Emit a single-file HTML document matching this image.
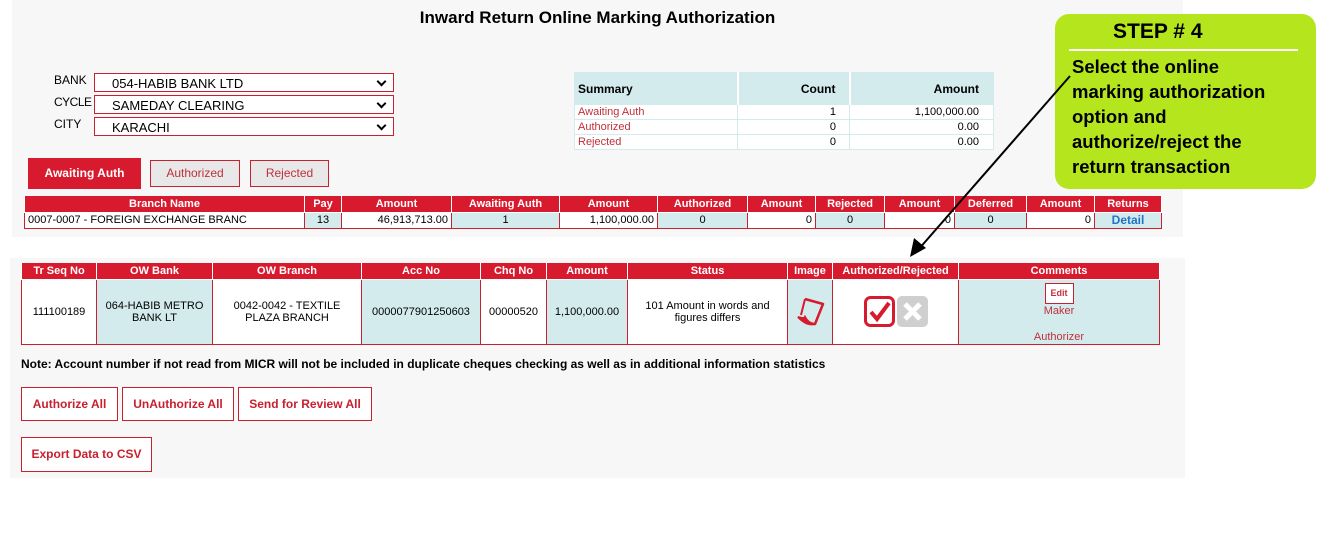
<!DOCTYPE html>
<html><head><meta charset="utf-8"><style>
*{box-sizing:border-box;margin:0;padding:0}
body{width:1319px;height:556px;background:#fff;font-family:"Liberation Sans",sans-serif;position:relative;overflow:hidden;font-size:11px;color:#000}
.a{position:absolute}
.panel{background:#f7f7f7}
table{border-collapse:collapse;position:absolute;table-layout:fixed}
th{background:#d71a2e;color:#fff;font-weight:bold;font-size:11px;border:1px solid #fff;border-top:0;padding:0;height:16px}
td{border:1px solid #c9202f;font-size:11px;padding:0 3px}
.c{background:#d4ebee}
.sel{position:absolute;left:94px;width:300px;height:19px;border:1px solid #c8202f;background:#fff;font-size:13px;padding-left:17px;line-height:19px}
.sel:after{content:"";position:absolute;right:8px;top:4px;width:5px;height:5px;border-right:2px solid #000;border-bottom:2px solid #000;transform:rotate(45deg)}
.lbl{position:absolute;left:54px;font-size:12px}
.btn{position:absolute;border:1px solid #c8202f;background:#fff;color:#c8202f;font-size:12px;font-weight:bold;text-align:center}
.st td{border:1px solid #d4ebee;color:#c0303b;height:15px;font-size:11px}
</style></head><body>
<div class="a panel" style="left:12px;top:0;width:1171px;height:237px"></div>
<div class="a panel" style="left:10px;top:258px;width:1175px;height:220px"></div>
<div class="a" style="left:0;width:1195px;top:8px;text-align:center;font-size:17px;font-weight:bold">Inward Return Online Marking Authorization</div>

<div class="lbl" style="top:73px">BANK</div><div class="sel" style="top:73px">054-HABIB BANK LTD</div>
<div class="lbl" style="top:95px;letter-spacing:-0.5px">CYCLE</div><div class="sel" style="top:95px">SAMEDAY CLEARING</div>
<div class="lbl" style="top:117px">CITY</div><div class="sel" style="top:117px">KARACHI</div>

<table class="st" style="left:574px;top:72px;width:419px">
<colgroup><col style="width:163px"><col style="width:112px"><col style="width:144px"></colgroup>
<tr style="height:32px;background:#d4ebee;font-weight:bold;font-size:12px"><td style="color:#000;font-size:12px;border-right:2px solid #fff">Summary</td><td style="color:#000;text-align:right;padding-right:13px;font-size:12px;border-right:2px solid #fff">Count</td><td style="color:#000;text-align:right;padding-right:14px;font-size:12px">Amount</td></tr>
<tr style="background:#fff"><td>Awaiting Auth</td><td style="color:#000;text-align:right;padding-right:13px">1</td><td style="color:#000;text-align:right;padding-right:14px">1,100,000.00</td></tr>
<tr style="background:#fff"><td>Authorized</td><td style="color:#000;text-align:right;padding-right:13px">0</td><td style="color:#000;text-align:right;padding-right:14px">0.00</td></tr>
<tr style="background:#fff"><td>Rejected</td><td style="color:#000;text-align:right;padding-right:13px">0</td><td style="color:#000;text-align:right;padding-right:14px">0.00</td></tr>
</table>

<div class="a" style="left:28px;top:158px;width:113px;height:31px;background:#d71a2e;color:#fff;font-size:12px;font-weight:bold;text-align:center;line-height:31px">Awaiting Auth</div>
<div class="a" style="left:150px;top:160px;width:90px;height:27px;background:#e8e8e8;border:1px solid #c8202f;color:#c0303b;font-size:12px;text-align:center;line-height:25px">Authorized</div>
<div class="a" style="left:250px;top:160px;width:79px;height:27px;background:#e8e8e8;border:1px solid #c8202f;color:#c0303b;font-size:12px;text-align:center;line-height:25px">Rejected</div>

<table style="left:24px;top:196px;width:1137px">
<colgroup><col style="width:280px"><col style="width:37px"><col style="width:110px"><col style="width:108px"><col style="width:98px"><col style="width:90px"><col style="width:68px"><col style="width:69px"><col style="width:70px"><col style="width:72px"><col style="width:68px"><col style="width:67px"></colgroup>
<tr><th>Branch Name</th><th>Pay</th><th>Amount</th><th>Awaiting Auth</th><th>Amount</th><th>Authorized</th><th>Amount</th><th>Rejected</th><th>Amount</th><th>Deferred</th><th>Amount</th><th>Returns</th></tr>
<tr style="height:16px;background:#fff"><td>0007-0007 - FOREIGN EXCHANGE BRANC</td><td class="c" style="text-align:center">13</td><td style="text-align:right">46,913,713.00</td><td class="c" style="text-align:center">1</td><td style="text-align:right">1,100,000.00</td><td class="c" style="text-align:center">0</td><td style="text-align:right">0</td><td class="c" style="text-align:center">0</td><td style="text-align:right">0</td><td class="c" style="text-align:center">0</td><td style="text-align:right">0</td><td class="c" style="text-align:center;color:#1f74c6;font-weight:bold;font-size:12px">Detail</td></tr>
</table>

<table style="left:21px;top:263px;width:1138px">
<colgroup><col style="width:75px"><col style="width:116px"><col style="width:149px"><col style="width:119px"><col style="width:66px"><col style="width:81px"><col style="width:160px"><col style="width:45px"><col style="width:126px"><col style="width:201px"></colgroup>
<tr><th>Tr Seq No</th><th>OW Bank</th><th>OW Branch</th><th>Acc No</th><th>Chq No</th><th>Amount</th><th>Status</th><th>Image</th><th>Authorized/Rejected</th><th>Comments</th></tr>
<tr style="height:64px;background:#fff;text-align:center"><td>111100189</td><td class="c">064-HABIB METRO BANK LT</td><td>0042-0042 - TEXTILE PLAZA BRANCH</td><td class="c">0000077901250603</td><td>00000520</td><td class="c">1,100,000.00</td><td>101 Amount in words and figures differs</td>
<td class="c" style="padding:0"><svg width="34" height="34" viewBox="0 0 34 34"><path d="M12 6 L30 11 L22 31 L19 31" fill="none" stroke="#d71a2e" stroke-width="2.5" stroke-linejoin="round"/><path d="M12 6 L8 22" fill="none" stroke="#d71a2e" stroke-width="2"/><path d="M5 24 Q11 26 12 24 Q15 30 21 31 Q14 33 5 24 Z" fill="#d71a2e" stroke="#d71a2e" stroke-width="2"/></svg></td>
<td><div style="display:flex;justify-content:center;gap:2px"><svg width="31" height="31" viewBox="0 0 31 31"><rect x="1.5" y="1.5" width="28" height="28" rx="5" fill="#fff" stroke="#d71a2e" stroke-width="3"/><path d="M7 16 L13 23 L25 7" fill="none" stroke="#d71a2e" stroke-width="4"/></svg><svg width="31" height="31" viewBox="0 0 31 31"><rect x="0" y="0" width="31" height="31" rx="5" fill="#cfcfcf"/><path d="M8 8 L23 23 M23 8 L8 23" stroke="#fff" stroke-width="5"/></svg></div></td>
<td class="c" style="color:#c0303b;vertical-align:top;padding-top:3px;line-height:13px"><div style="display:inline-block;background:#fff;border:1px solid #c8202f;color:#c0303b;font-size:9px;font-weight:bold;padding:3px 5px">Edit</div><div style="margin-top:1px">Maker</div><div style="margin-top:13px">Authorizer</div></td></tr>
</table>

<div class="a" style="left:21px;top:357px;font-size:12px;font-weight:bold">Note: Account number if not read from MICR will not be included in duplicate cheques checking as well as in additional information statistics</div>
<div class="btn" style="left:21px;top:387px;width:97px;height:34px;line-height:32px">Authorize All</div>
<div class="btn" style="left:122px;top:387px;width:112px;height:34px;line-height:32px">UnAuthorize All</div>
<div class="btn" style="left:238px;top:387px;width:134px;height:34px;line-height:32px">Send for Review All</div>
<div class="btn" style="left:21px;top:437px;width:131px;height:35px;line-height:33px">Export Data to CSV</div>

<div class="a" style="left:1055px;top:14px;width:261px;height:175px;background:#b5e61d;border-radius:14px"></div>
<div class="a" style="left:1113px;top:20px;font-size:21px;font-weight:bold">STEP # 4</div>
<div class="a" style="left:1069px;top:49px;width:229px;height:2px;background:#fff"></div>
<div class="a" style="left:1072px;top:54px;font-size:18.5px;font-weight:bold;line-height:25px">Select the online<br>marking authorization<br>option and<br>authorize/reject the<br>return transaction</div>

<svg class="a" style="left:0;top:0" width="1319" height="556"><path d="M1070 76 L918 250" stroke="#000" stroke-width="2"/><path d="M910 257 L914 238 L926 248 Z" fill="#000"/></svg>
</body></html>
